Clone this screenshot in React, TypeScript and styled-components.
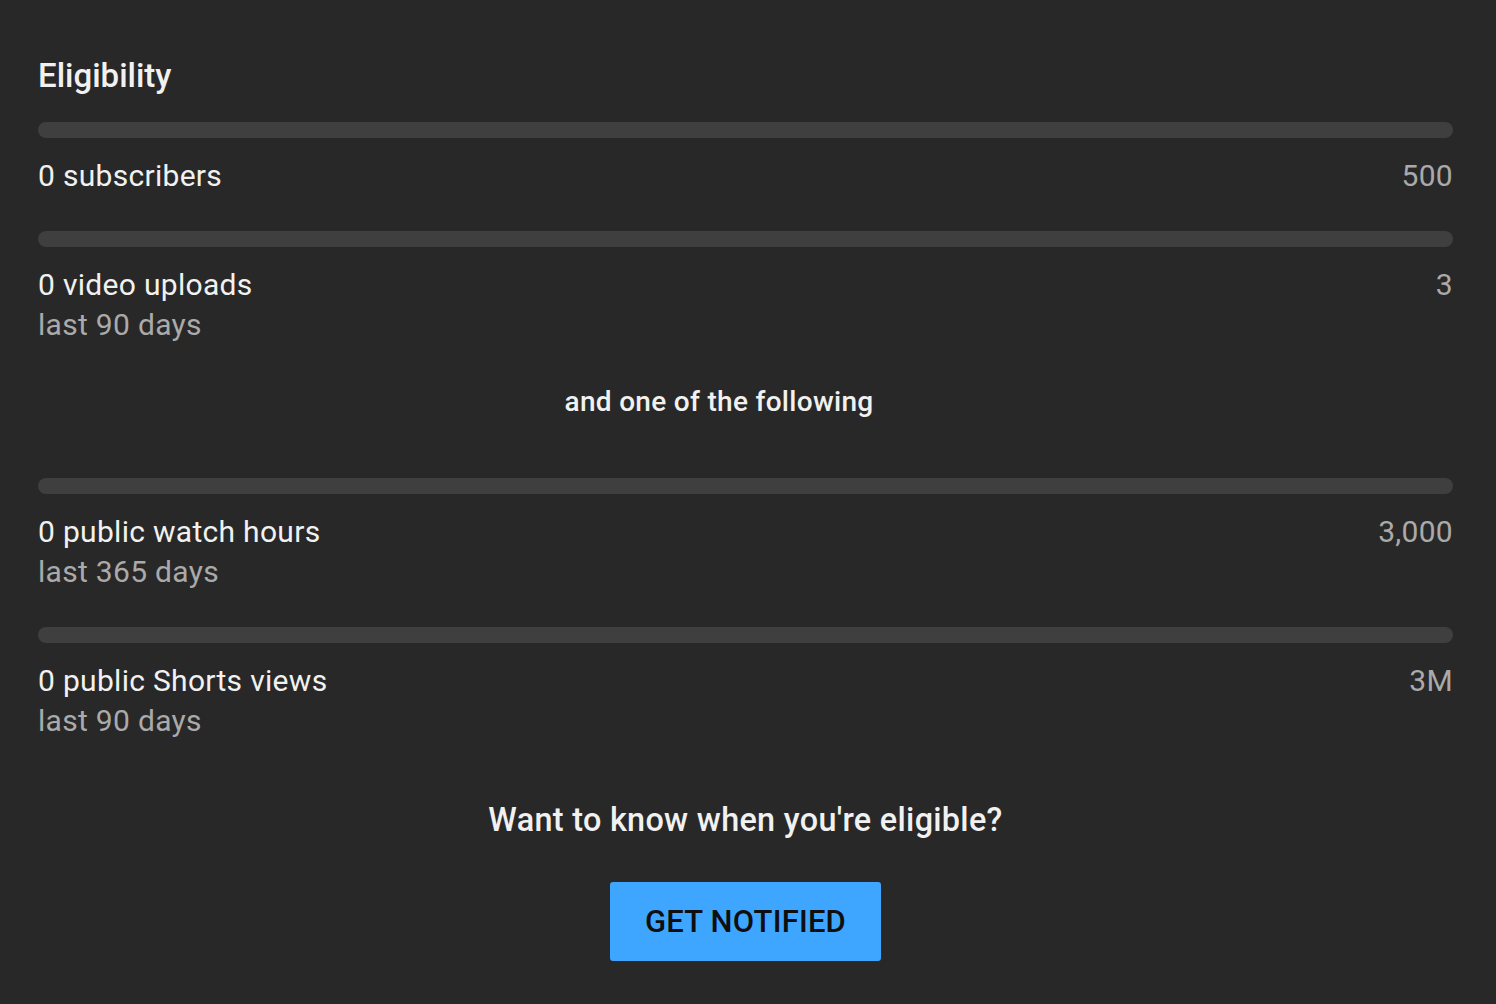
import styled, { createGlobalStyle } from 'styled-components';

const GlobalStyle = createGlobalStyle`
  html, body {
    margin: 0;
    padding: 0;
    background: #282828;
  }
  body {
    font-family: 'Roboto', 'Noto Sans', 'Liberation Sans', sans-serif;
    color: #f1f1f1;
  }
`;

const Page = styled.main`
  box-sizing: border-box;
  display: flex;
  flex-direction: column;
  min-height: 1004px;
  padding: 56px 43px 40px 38px;
  background: #282828;
`;

const Title = styled.h1`
  margin: 0 0 26px;
  font-size: 33px;
  line-height: 40px;
  font-weight: 500;
  color: #f1f1f1;
`;

const Row = styled.section`
  margin-bottom: 35px;
`;

const Bar = styled.div`
  height: 16px;
  border-radius: 8px;
  background: #3f3f3f;
  margin-bottom: 18px;
`;

const Line = styled.div`
  display: flex;
  justify-content: space-between;
  font-size: 30px;
  letter-spacing: 0.3px;
  line-height: 40px;
`;

const Label = styled.span`
  color: #f1f1f1;
`;

const Target = styled.span`
  color: #aaaaaa;
`;

const Sub = styled.div`
  font-size: 30px;
  letter-spacing: 0.3px;
  line-height: 40px;
  color: #aaaaaa;
`;

const Divider = styled.p<{ $size: number; $after: number; $before: number; $shift?: number }>`
  margin: ${(p) => p.$before}px 0 ${(p) => p.$after}px;
  padding-right: ${(p) => p.$shift ?? 0}px;
  text-align: center;
  font-size: ${(p) => p.$size}px;
  letter-spacing: 0.3px;
  line-height: 40px;
  font-weight: 500;
  color: #f1f1f1;
`;

const Center = styled.div`
  display: flex;
  justify-content: center;
`;

const NotifyButton = styled.button`
  width: 271px;
  height: 79px;
  border: none;
  border-radius: 3px;
  background: #3ea6ff;
  color: #0f0f0f;
  font-family: 'Roboto', 'Noto Sans', 'Liberation Sans', sans-serif;
  font-size: 31px;
  font-weight: 500;
  letter-spacing: 0.2px;
  cursor: pointer;
`;

type Requirement = {
  label: string;
  target: string;
  sub?: string;
};

const base: Requirement[] = [
  { label: '0 subscribers', target: '500' },
  { label: '0 video uploads', target: '3', sub: 'last 90 days' },
];

const either: Requirement[] = [
  { label: '0 public watch hours', target: '3,000', sub: 'last 365 days' },
  { label: '0 public Shorts views', target: '3M', sub: 'last 90 days' },
];

function RequirementRow({ item }: { item: Requirement }) {
  return (
    <Row>
      <Bar />
      <Line>
        <Label>{item.label}</Label>
        <Target>{item.target}</Target>
      </Line>
      {item.sub && <Sub>{item.sub}</Sub>}
    </Row>
  );
}

export default function App() {
  return (
    <>
      <GlobalStyle />
      <Page>
        <Title>Eligibility</Title>
        {base.map((r) => (
          <RequirementRow key={r.label} item={r} />
        ))}
        <Divider $size={28} $before={2} $after={56} $shift={53}>
          and one of the following
        </Divider>
        {either.map((r) => (
          <RequirementRow key={r.label} item={r} />
        ))}
        <Divider $size={32.4} $before={24} $after={42}>
          Want to know when you're eligible?
        </Divider>
        <Center>
          <NotifyButton>GET NOTIFIED</NotifyButton>
        </Center>
      </Page>
    </>
  );
}
